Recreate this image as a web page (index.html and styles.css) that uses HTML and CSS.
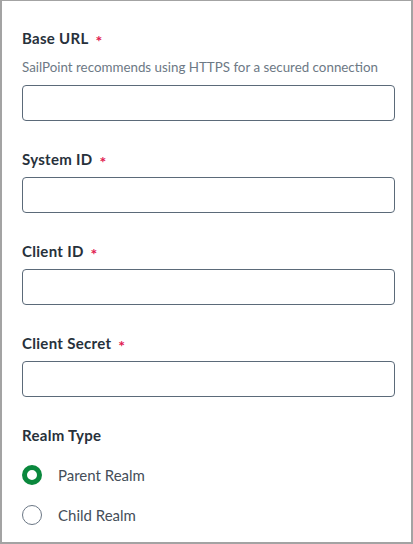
FILE: index.html
```html
<!DOCTYPE html>
<html>
<head>
<meta charset="utf-8">
<link rel="stylesheet" href="styles.css">
</head>
<body>
<div class="panel">
  <div class="field">
    <div class="label">Base URL<span class="req">*</span></div>
    <div class="help">SailPoint recommends using HTTPS for a secured connection</div>
    <input class="input" type="text">
  </div>
  <div class="field">
    <div class="label">System ID<span class="req">*</span></div>
    <input class="input" type="text">
  </div>
  <div class="field">
    <div class="label">Client ID<span class="req">*</span></div>
    <input class="input" type="text">
  </div>
  <div class="field">
    <div class="label">Client Secret<span class="req">*</span></div>
    <input class="input" type="text">
  </div>
  <div class="field realm">
    <div class="label">Realm Type</div>
    <div class="radios">
      <label class="radio-row"><span class="radio checked"></span><span class="radio-text">Parent Realm</span></label>
      <label class="radio-row"><span class="radio"></span><span class="radio-text">Child Realm</span></label>
    </div>
  </div>
</div>
</body>
</html>
```

FILE: styles.css
```css
* { box-sizing: border-box; }
html, body { margin: 0; padding: 0; background: #fff; }
body { font-family: "Lato", "Open Sans", sans-serif; }
.panel {
  width: 413px;
  height: 544px;
  border: 1px solid #a3a3a3;
  border-left-width: 2px;
  border-right-width: 2px;
  border-bottom-width: 2px;
  padding: 27px 16px 0 20px;
  display: flex;
  flex-direction: column;
  gap: 28px;
}
.field { display: flex; flex-direction: column; }
.label {
  font-size: 15px;
  line-height: 20px;
  height: 20px;
  font-weight: 700;
  letter-spacing: 0.3px;
  color: #27313b;
  margin-bottom: 8px;
  white-space: nowrap;
}
.req {
  color: #e1194f;
  font-weight: 700;
  margin-left: 7px;
  font-size: 16px;
  line-height: 10px;
  vertical-align: -3px;
}
.help {
  font-size: 13.35px;
  line-height: 18px;
  height: 18px;
  color: #6d7985;
  margin-top: 2px;
  margin-bottom: 9px;
}
.input {
  display: block;
  width: 373px;
  height: 36px;
  border: 1px solid #5b6a79;
  border-radius: 4px;
  margin: 0;
  padding: 0 10px;
  background: #fff;
  outline: none;
}
.realm .label { margin-bottom: 10px; }
.radios { display: flex; flex-direction: column; }
.radio-row {
  height: 40px;
  display: flex;
  align-items: center;
  gap: 16px;
}
.radio {
  width: 20px;
  height: 20px;
  border-radius: 50%;
  border: 1px solid #6b7785;
  flex: none;
}
.radio.checked { border: 5.5px solid #0a883d; }
.radio-text { font-size: 15px; color: #454e59; }
```
